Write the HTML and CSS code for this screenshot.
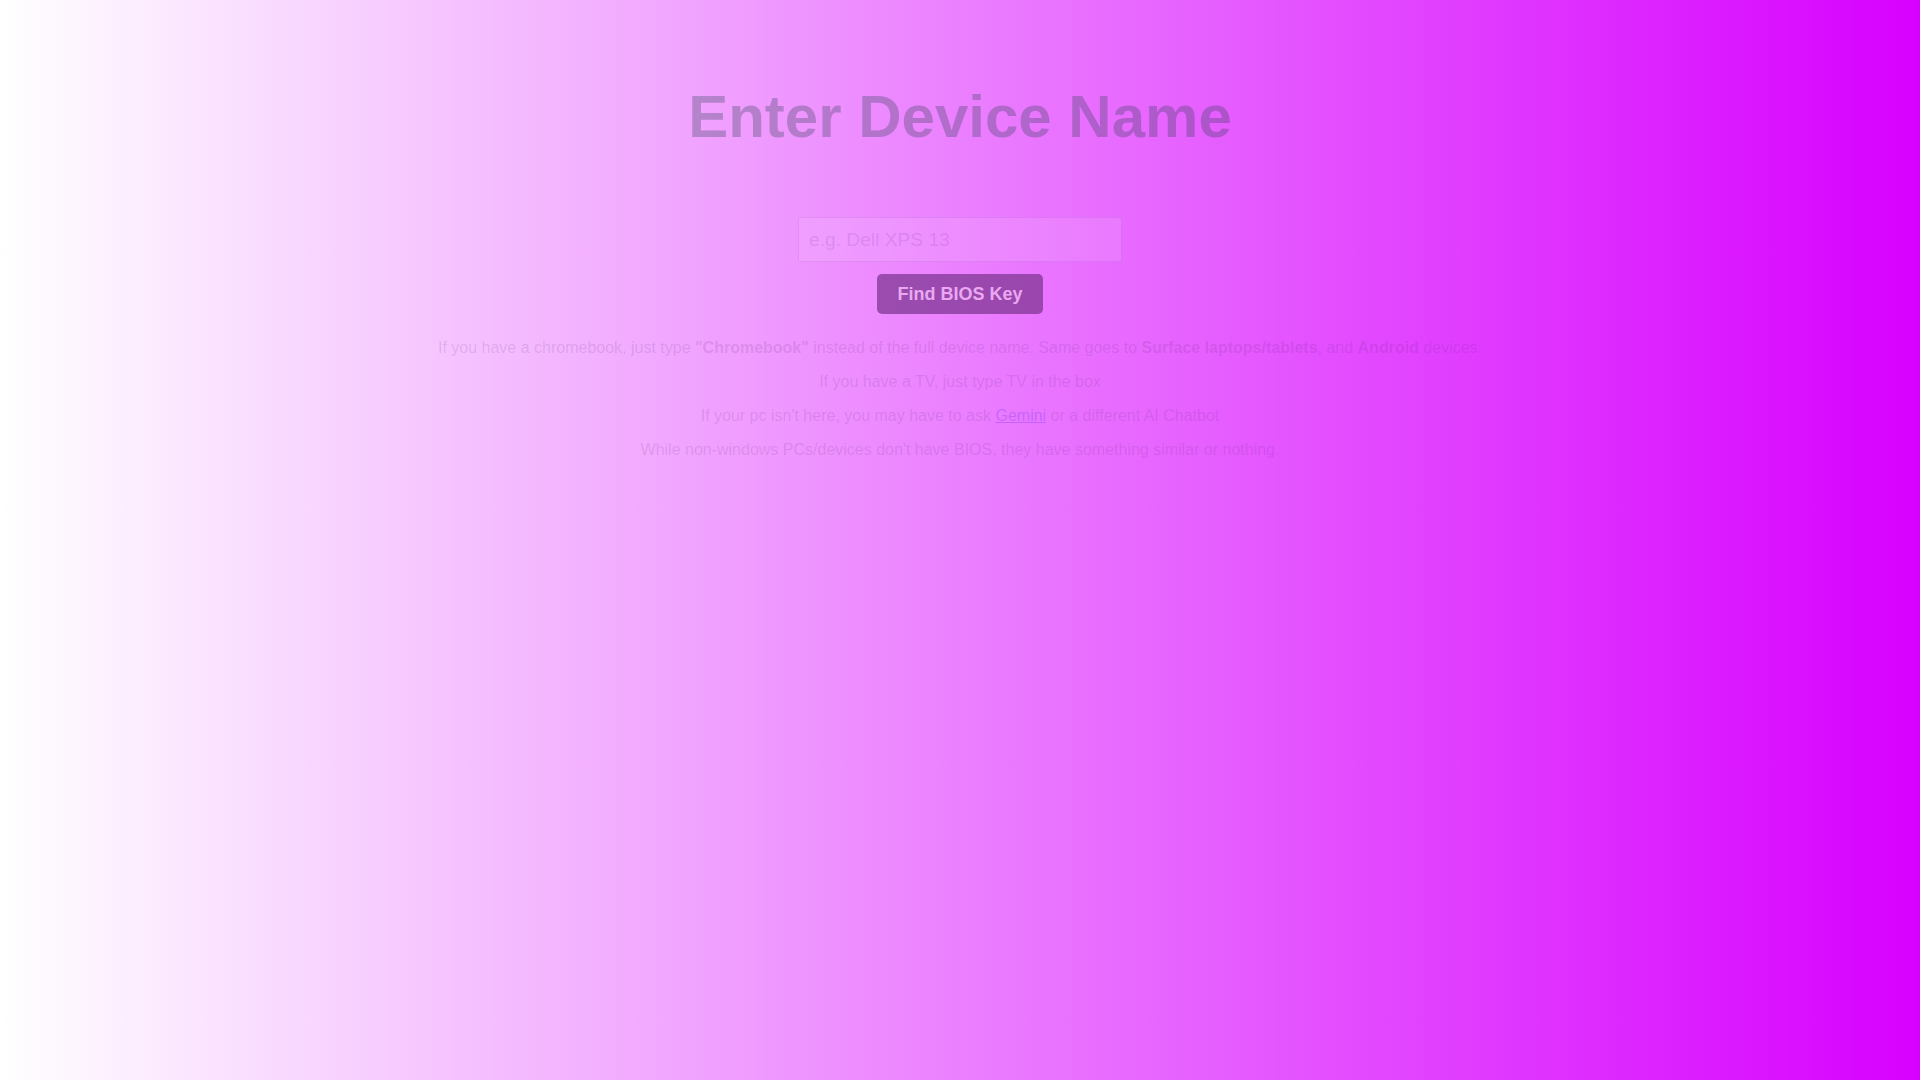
FILE: index.html
```html
<!DOCTYPE html>
<html lang="en">
<head>
<meta charset="utf-8">
<title>Enter Device Name</title>
<link rel="stylesheet" href="styles.css">
</head>
<body>
<main class="page">
  <h1 class="title">Enter Device Name</h1>
  <form class="search" onsubmit="return false;">
    <input class="device-input" type="text" placeholder="e.g. Dell XPS 13">
    <button class="find-btn" type="submit">Find BIOS Key</button>
  </form>
  <section class="notes">
    <p>If you have a chromebook, just type <b>"Chromebook"</b> instead of the full device name. Same goes to <b>Surface laptops/tablets</b>, and <b>Android</b> devices.</p>
    <p>If you have a TV, just type TV in the box</p>
    <p>If your pc isn't here, you may have to ask <a class="link" href="#">Gemini</a> or a different AI Chatbot</p>
    <p>While non-windows PCs/devices don't have BIOS, they have something similar or nothing.</p>
  </section>
</main>
</body>
</html>
```

FILE: styles.css
```css
html, body {
  margin: 0;
  padding: 0;
}

body {
  min-height: 100vh;
  background: linear-gradient(to right, #ffffff, #d700ff);
  font-family: "Liberation Sans", Arial, sans-serif;
}

.page {
  padding-top: 82px;
  text-align: center;
}

.title {
  margin: 0 0 66px;
  font-size: 60px;
  line-height: 69px;
  font-weight: bold;
  color: rgba(44, 62, 80, 0.3);
}

.search {
  display: flex;
  flex-direction: column;
  align-items: center;
  gap: 12px;
  margin: 0 0 25px;
}

.device-input {
  box-sizing: border-box;
  width: 324px;
  height: 45px;
  padding: 0 10px;
  font-family: "Liberation Sans", Arial, sans-serif;
  font-size: 19.2px;
  background: rgba(255, 255, 255, 0.1);
  border: 1px solid rgba(142, 68, 173, 0.16);
  border-radius: 2px;
  color: rgba(80, 30, 100, 0.6);
  outline: none;
}

.device-input::placeholder {
  color: rgba(142, 68, 173, 0.2);
}

.find-btn {
  box-sizing: border-box;
  height: 40px;
  padding: 0 20px;
  font-family: "Liberation Sans", Arial, sans-serif;
  font-size: 18px;
  font-weight: bold;
  color: #eaa8f2;
  background: rgba(120, 50, 140, 0.7);
  border: none;
  border-radius: 5px;
  cursor: pointer;
}

.notes p {
  margin: 0 0 16px;
  font-size: 16px;
  line-height: 18px;
  color: rgba(80, 30, 100, 0.14);
}

.notes b {
  font-weight: bold;
}

.link {
  color: rgba(40, 20, 238, 0.2);
  text-decoration: underline;
}
```
